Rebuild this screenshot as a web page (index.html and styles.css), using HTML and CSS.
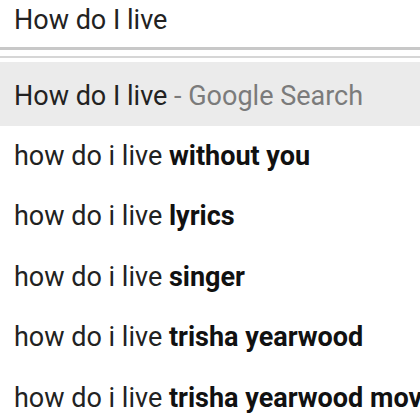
FILE: index.html
```html
<!DOCTYPE html>
<html lang="en">
<head>
    <meta charset="UTF-8">
    <meta name="viewport" content="width=device-width, initial-scale=1.0">
    <title>Search suggestions</title>
    <link rel="stylesheet" href="styles.css">
</head>
<body>
    <div class="search">
        <div class="search-input">How do I live</div>
        <div class="divider"></div>
        <ul class="suggestions">
            <li class="suggestion active">How do I live<span class="hint"> - Google Search</span></li>
            <li class="suggestion">how do i live <b>without you</b></li>
            <li class="suggestion">how do i live <b>lyrics</b></li>
            <li class="suggestion">how do i live <b>singer</b></li>
            <li class="suggestion">how do i live <b>trisha yearwood</b></li>
            <li class="suggestion">how do i live <b>trisha yearwood movie</b></li>
        </ul>
    </div>
</body>
</html>
```

FILE: styles.css
```css
body {
    margin: 0;
    background: #fff;
    font-family: Roboto, "Liberation Sans", sans-serif;
    font-size: 27px;
    color: #222;
    overflow: hidden;
}
.search {
    width: 420px;
}
.search-input {
    padding: 0 14px 7px;
    line-height: 40px;
    height: 40px;
    border-bottom: 3px solid #c8c8c8;
    white-space: nowrap;
}
.divider {
    margin-top: 6px;
    height: 2px;
    background: #d6d6d6;
}
.suggestions {
    list-style: none;
    margin: 4px 0 0;
    padding: 0;
}
.suggestion {
    padding-left: 14px;
    line-height: 60.4px;
    height: 60.4px;
    white-space: nowrap;
    overflow: hidden;
}
.suggestion b {
    color: #111;
    font-weight: 700;
}
.suggestion.active {
    background: #ebebeb;
    padding-top: 3.6px;
}
.hint {
    color: #7b7b7b;
}
```
